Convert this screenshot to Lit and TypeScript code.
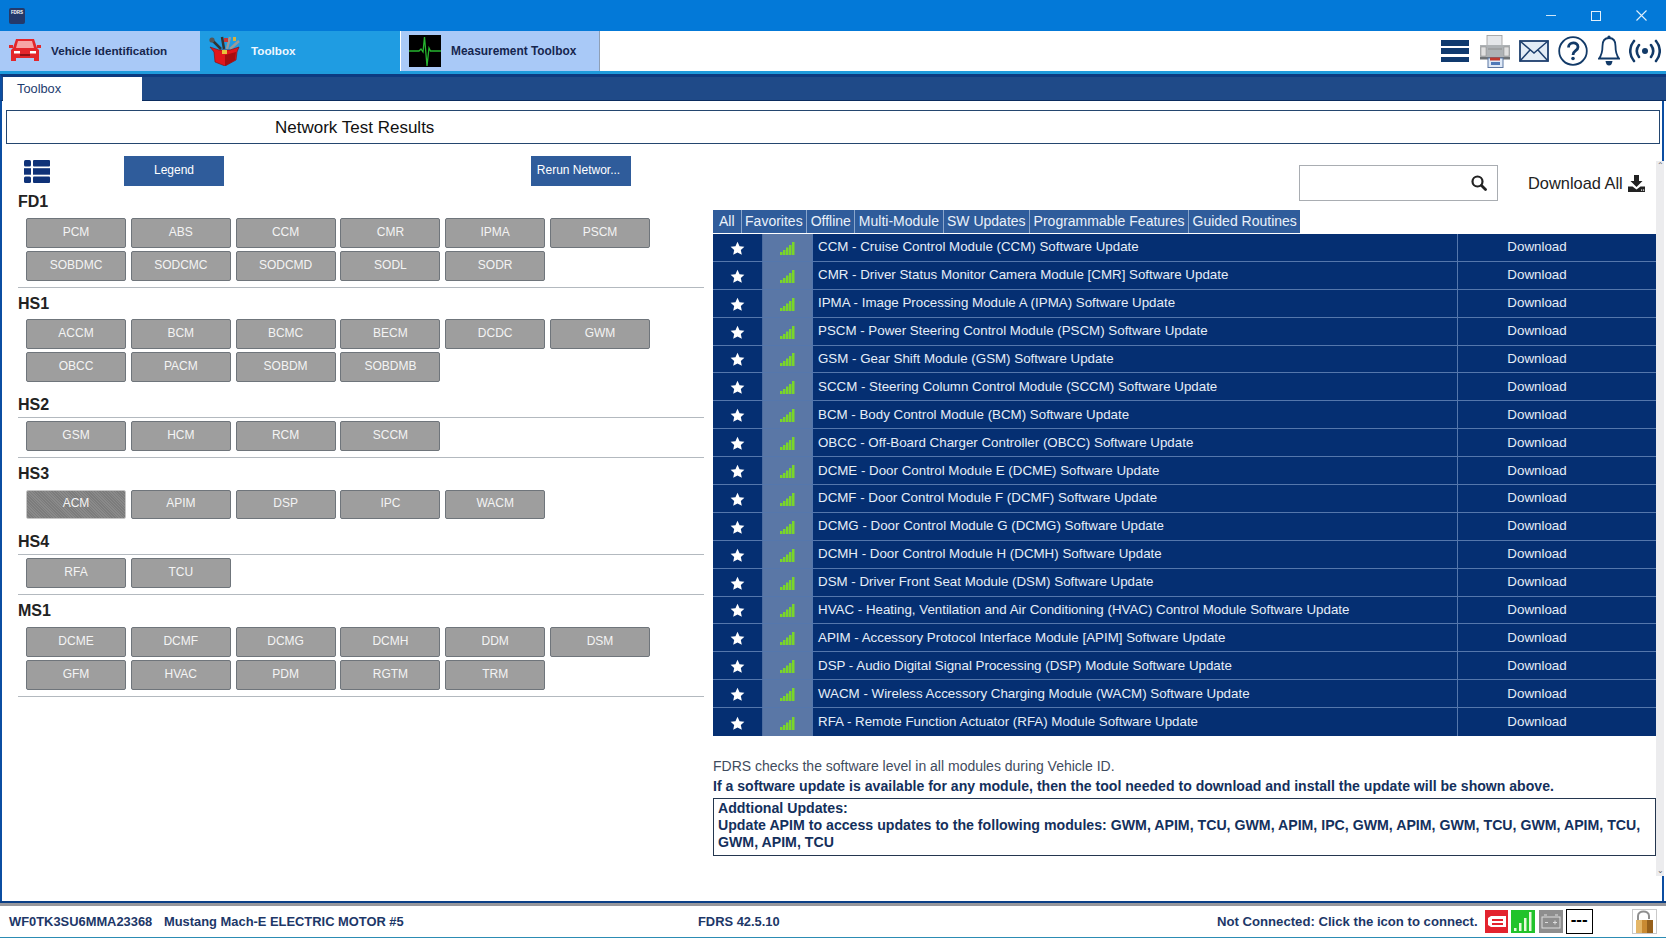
import { LitElement, html, css } from "lit";
import { customElement } from "lit/decorators.js";

const SECTIONS = [
  { name: "FD1", cls: "fd1", mods: ["PCM","ABS","CCM","CMR","IPMA","PSCM","SOBDMC","SODCMC","SODCMD","SODL","SODR"] },
  { name: "HS1", cls: "hs1", mods: ["ACCM","BCM","BCMC","BECM","DCDC","GWM","OBCC","PACM","SOBDM","SOBDMB"] },
  { name: "HS2", cls: "hs2", mods: ["GSM","HCM","RCM","SCCM"] },
  { name: "HS3", cls: "hs3", mods: ["ACM","APIM","DSP","IPC","WACM"] },
  { name: "HS4", cls: "hs4", mods: ["RFA","TCU"] },
  { name: "MS1", cls: "ms1", mods: ["DCME","DCMF","DCMG","DCMH","DDM","DSM","GFM","HVAC","PDM","RGTM","TRM"] },
];

const ROWS = [
  "CCM - Cruise Control Module (CCM) Software Update",
  "CMR - Driver Status Monitor Camera Module [CMR] Software Update",
  "IPMA - Image Processing Module A (IPMA) Software Update",
  "PSCM - Power Steering Control Module (PSCM) Software Update",
  "GSM - Gear Shift Module (GSM) Software Update",
  "SCCM - Steering Column Control Module (SCCM) Software Update",
  "BCM - Body Control Module (BCM) Software Update",
  "OBCC - Off-Board Charger Controller (OBCC) Software Update",
  "DCME - Door Control Module E (DCME) Software Update",
  "DCMF - Door Control Module F (DCMF) Software Update",
  "DCMG - Door Control Module G (DCMG) Software Update",
  "DCMH - Door Control Module H (DCMH) Software Update",
  "DSM - Driver Front Seat Module (DSM) Software Update",
  "HVAC - Heating, Ventilation and Air Conditioning (HVAC) Control Module Software Update",
  "APIM - Accessory Protocol Interface Module [APIM] Software Update",
  "DSP - Audio Digital Signal Processing (DSP) Module Software Update",
  "WACM - Wireless Accessory Charging Module (WACM) Software Update",
  "RFA - Remote Function Actuator (RFA) Module Software Update",
];

const FILTERS = ["All","Favorites","Offline","Multi-Module","SW Updates","Programmable Features","Guided Routines"];

const star = html`<svg class="star" viewBox="0 0 24 24" width="15" height="15"><path fill="#fff" d="M12 1l3.300 7.200 7.700.9-5.700 5.200 1.600 7.700L12 18.300 5.100 22l1.600-7.700L1 9.100l7.700-.9z"/></svg>`;
const bars = html`<svg viewBox="0 0 15 13" width="15" height="13"><g fill="#7ad629">
  <rect x="0" y="10" width="2.500" height="3"/><rect x="3" y="8" width="2.500" height="5"/><rect x="6" y="5.500" width="2.500" height="7.500"/><rect x="9" y="3" width="2.500" height="10"/><rect x="12" y="0" width="2.500" height="13"/></g></svg>`;

const carIcon = html`<svg viewBox="0 0 32 30" width="32" height="30"><g fill="#e3262b">
  <path d="M7 3h18l3 9 2 2v11h-5v-3H7v3H2V14l2-2z"/><path d="M0 9h4v3H0zM28 9h4v3h-4z"/></g>
  <path fill="#f7a5a5" d="M9 5h14l2 7H7z"/><g fill="#fff"><rect x="5" y="15" width="6" height="2.500"/><rect x="21" y="15" width="6" height="2.500"/></g><rect x="11" y="18" width="10" height="2" fill="#8c1115"/></svg>`;
const toolboxIcon = html`<svg viewBox="0 0 32 30" width="32" height="30">
  <path fill="none" stroke="#333" stroke-width="2.500" d="M3 4l9 9M13 1l2 12"/><path fill="none" stroke="#9a9a9a" stroke-width="2.500" d="M21 1l-3 12M30 5l-9 8"/><circle cx="3" cy="4" r="2.600" fill="#555"/><rect x="15" y="2" width="4" height="4" fill="#c33"/><rect x="24" y="1" width="3" height="4" fill="#d9b23c"/>
  <path fill="#e0161c" stroke="#7d0b0e" stroke-width=".6" d="M1 11l9 3h11l9-3-2 5-1 8-11 6-10-4-1-10z"/><path fill="#a50d11" d="M16 19l11-3-1 8-10 6z"/><rect x="13" y="14" width="5" height="4" fill="#e8c23c"/></svg>`;
const ecgIcon = html`<svg viewBox="0 0 32 32" width="32" height="32"><rect width="32" height="32" fill="#000"/><path fill="none" stroke="#26b52f" stroke-width="1.300" d="M0 16h10l2-2 2 3 1.500-15 2.500 29 2-18 1.500 3h11"/></svg>`;
const printerIcon = html`<svg viewBox="0 0 32 33" width="32" height="33">
  <rect x="8" y="0.500" width="15" height="12" fill="#e4e6e9" stroke="#999" stroke-width=".8"/><path fill="#aeb2b5" d="M1 10h30v13H1z"/><path fill="#6f7376" d="M1 22h30v2.500H1z"/><rect x="2" y="12" width="5" height="9" fill="#e0e0e0" stroke="#888" stroke-width=".5"/><rect x="25" y="12" width="5" height="9" fill="#e0e0e0" stroke="#888" stroke-width=".5"/><path stroke="#888" stroke-width=".8" d="M9 14h14"/>
  <rect x="9" y="23" width="15" height="9.500" fill="#dfe9f7" stroke="#5d78a3" stroke-width="1"/><path fill="#c03a2f" d="M11 22.500h10v3H11z"/><path fill="#4f79b8" d="M12 27h9v3h-9z"/></svg>`;
const mailIcon = html`<svg viewBox="0 0 30 22" width="30" height="22"><rect x="1" y="1" width="28" height="20" fill="#e3ecf6" stroke="#1d3f6e" stroke-width="1.800"/><path fill="none" stroke="#1d3f6e" stroke-width="1.500" d="M1 1l14 12L29 1M1 21l10-11M29 21L19 10"/></svg>`;
const helpIcon = html`<svg viewBox="0 0 30 30" width="30" height="30"><circle cx="15" cy="15" r="13.800" fill="#fff" stroke="#123a68" stroke-width="1.800"/><path fill="none" stroke="#123a68" stroke-width="2.800" d="M10.500 11.500c0-6 9.500-6 9.500-.5 0 4-5 3.500-5 8"/><circle cx="15" cy="22.500" r="1.800" fill="#123a68"/></svg>`;
const bellIcon = html`<svg viewBox="0 0 22 32" width="22" height="32"><path fill="#fff" stroke="#123a68" stroke-width="1.800" d="M11 3c-5 0-6.500 4-6.500 8 0 6-1.500 10-3.500 12.500h20C19 21 17.500 17 17.500 11c0-4-1.500-8-6.500-8z"/><circle cx="11" cy="2" r="1.600" fill="#123a68"/><path fill="#123a68" d="M7.500 26h7c-.5 3-1.500 4.500-3.500 4.500S8 29 7.500 26z"/></svg>`;
const signalIcon = html`<svg viewBox="0 0 32 24" width="32" height="24"><g fill="none" stroke="#123a68" stroke-width="2.600" stroke-linecap="round"><path d="M5 2C0 8 0 16 5 22M10 6c-3 4-3 8 0 12M27 2c5 6 5 14 0 20M22 6c3 4 3 8 0 12"/></g><circle cx="16" cy="12" r="3" fill="#123a68"/></svg>`;
const gridIcon = html`<svg viewBox="0 0 26 23" width="26" height="23"><g fill="#0f3278"><rect x="0" y="0" width="7" height="6.500" rx="1.500"/><rect x="9" y="0" width="17" height="6.500" rx="1"/><rect x="0" y="8.200" width="7" height="6.500"/><rect x="9" y="8.200" width="17" height="6.500"/><rect x="0" y="16.500" width="7" height="6.500" rx="1.500"/><rect x="9" y="16.500" width="17" height="6.500" rx="1"/></g></svg>`;
const searchIcon = html`<svg viewBox="0 0 16 16" width="16" height="16"><circle cx="6.500" cy="6.500" r="5" fill="none" stroke="#222" stroke-width="2.200"/><path stroke="#222" stroke-width="2.800" stroke-linecap="round" d="M10.500 10.500l4 4"/></svg>`;
const downloadIcon = html`<svg viewBox="0 0 17 17" width="17" height="17"><path fill="#222" d="M6 0h5v6h3.500L8.500 12 2.500 6H6z"/><path fill="#222" d="M0 11.500h4.500L8.500 14.500l4-3H17V17H0z"/><rect x="13" y="14.500" width="1.200" height="1.200" fill="#fff"/><rect x="15" y="14.500" width="1.200" height="1.200" fill="#fff"/></svg>`;
const redIcon = html`<svg viewBox="0 0 23 23" width="23" height="23"><rect width="23" height="23" fill="#e3232e"/><path fill="#fff" d="M3 8l3-2h15v11H6l-3-2z"/><path fill="#e3232e" d="M7 9h11v2H7zM7 13h11v2H7z"/></svg>`;
const greenIcon = html`<svg viewBox="0 0 24 23" width="24" height="23"><rect width="24" height="23" fill="#21c32b"/><g fill="#e9f9dc"><rect x="3" y="18" width="2.500" height="3"/><rect x="8" y="13" width="2.500" height="8"/><rect x="13" y="8" width="2.500" height="13"/><rect x="18" y="2" width="2.500" height="19"/></g></svg>`;
const battIcon = html`<svg viewBox="0 0 24 23" width="24" height="23"><rect width="24" height="23" fill="#8e8e8e"/><rect x="3" y="7" width="18" height="11" fill="none" stroke="#dcdcdc"/><path stroke="#dcdcdc" d="M5 5h3M16 5h3M6 12.500h3M14 12.500h4M16 10.500v4"/></svg>`;
const lockIcon = html`<svg viewBox="0 0 25 25" width="25" height="25"><rect x=".5" y=".5" width="24" height="24" fill="#fff" stroke="#c9c9c9"/><path fill="none" stroke="#8f8f8f" stroke-width="2" d="M6 11V7c0-6 11-6 11 0v3"/><rect x="4" y="11" width="17" height="13" fill="#c98a32"/><rect x="4" y="11" width="6" height="13" fill="#e4b667"/><rect x="15" y="11" width="6" height="13" fill="#96601b"/></svg>`;

@customElement("app-root")
export class AppRoot extends LitElement {
  static styles = css`
    :host { display: flex; flex-direction: column; width: 1666px; height: 938px; overflow: hidden; background: #fff; font-family: "Liberation Sans", Arial, sans-serif; color: #1a2f55; }
    svg { display: block; flex: none; }

    .title { height: 31px; flex: none; background: #0379d8; display: flex; align-items: center; padding-left: 9px; }
    .logo { width: 16px; height: 16px; background: #24396a; border-radius: 2px; color: #fff; font-size: 4.500px; font-weight: 700; text-align: center; line-height: 9px; overflow: hidden; }
    .winbtns { margin-left: auto; display: flex; align-items: center; padding-right: 19px; gap: 35px; }
    .min { width: 10px; height: 1px; background: #cfe6f8; }
    .max { width: 10px; height: 10px; border: 1px solid #e2f0fb; box-sizing: border-box; }

    .nav { height: 40px; flex: none; display: flex; background: #fff; border-bottom: 3px solid #1f9bdc; box-sizing: content-box; }
    .nt { width: 200px; display: flex; align-items: center; background: #a9c9f7; font-size: 11.700px; font-weight: 700; color: #16264f; padding-bottom: 1px; box-sizing: border-box; }
    .nt .ic { width: 51px; display: flex; justify-content: center; padding-right: 2px; box-sizing: border-box; }
    .nt.on { background: #1f9ce2; color: #eef7ff; }
    .nt.m { margin-left: 1px; width: 199px; border-right: 1px solid #8f9fb5; font-size: 11.900px; padding-bottom: 0; }
    .nt.m .ic { justify-content: flex-end; padding-right: 10px; width: 50px; }
    .tools { margin-left: auto; display: flex; align-items: center; padding-right: 5px; }
    .burger { width: 28px; height: 22px; margin-right: 10px; display: flex; flex-direction: column; justify-content: space-between; }
    .burger i { display: block; height: 5.500px; background: #103a6e; }
    .tools .p { margin-right: 8px; }
    .tools .e { margin-right: 9px; }
    .tools .h { margin-right: 10px; }
    .tools .b { margin-right: 9px; }

    .sub { height: 27px; flex: none; background: #1f4a88; border-top: 3px solid #0d3a80; border-bottom: 1px solid #0b2c5e; box-sizing: border-box; padding-left: 1px; border-left: 2px solid #0b4ea2; display: flex; align-items: flex-end; }
    .subtab { width: 139px; height: 24px; margin-bottom: -1px; background: #fff; font-size: 12.800px; line-height: 24px; padding-left: 14px; box-sizing: border-box; color: #1d3c6e; }

    .frame { flex: 1; min-height: 0; margin-right: 2px; border-left: 2px solid #0b4ea2; border-right: 2px solid #0b4ea2; display: flex; flex-direction: column; }
    .head { flex: none; height: 34px; margin: 9px 2px 0 4px; border: 1px solid #24466f; box-sizing: border-box; font-size: 17px; line-height: 33px; padding-left: 268px; color: #111; }
    .body { flex: 1; display: flex; min-height: 0; }

    .left { width: 711px; flex: none; box-sizing: border-box; padding: 12px 9px 0 16px; }
    .lt { height: 30px; display: flex; align-items: center; margin-bottom: 9px; }
    .lt .g { margin-left: 6px; }
    .pri { height: 30px; width: 100px; background: #2f5c9b; color: #fff; font-size: 12px; display: flex; align-items: center; justify-content: center; box-sizing: border-box; padding-bottom: 2px; }
    .pri.leg { margin-left: 74px; }
    .pri.rer { margin-left: 307px; padding-right: 5px; }

    .lbl { font-size: 16px; font-weight: 700; height: 14px; line-height: 14px; color: #222; }
    .sec + .sec .lbl { line-height: 16px; }
    .rule { height: 1px; background: #b3b9bf; }
    .mods { display: grid; grid-template-columns: repeat(6, 100px); column-gap: 4.800px; row-gap: 3px; grid-auto-rows: 30px; margin: 9px 0 0 8px; }
    .mod { background: #9e9e9e; border: 1px solid #6f757b; border-radius: 2px; box-sizing: border-box; color: #f4f4f4; font-size: 12px; display: flex; align-items: center; justify-content: center; padding-bottom: 3px; }
    .mod.sel { border-color: #c5c5c5; background: repeating-linear-gradient(45deg, #7c7c7c 0 1px, #8a8a8a 1px 2px); }
    .sec { margin-bottom: 8px; }
    .sec .rule { margin-top: 6px; }
    .sec.hs1 { margin-bottom: 15px; }
    .sec.hs2 .rule.top, .sec.hs4 .rule.top { margin-bottom: -6px; }
    .sec.hs3 { margin-bottom: 15px; }
    .sec.hs3 .mods { margin-top: 10px; grid-auto-rows: 29px; }
    .sec.ms1 .mods { margin-top: 10px; }

    .right { width: 943px; flex: none; display: flex; flex-direction: column; }
    .rt { margin-top: 21px; height: 36px; flex: none; display: flex; align-items: center; }
    .search { margin-left: 586px; width: 199px; height: 36px; box-sizing: border-box; border: 1px solid #a9adb2; display: flex; align-items: center; justify-content: flex-end; padding-right: 10px; }
    .dlall { margin-left: 30px; display: flex; align-items: center; gap: 5px; font-size: 16.400px; color: #222; }
    .filters { margin-top: 9px; height: 23px; flex: none; display: flex; align-self: flex-start; background: #2f5c9b; }
    .f { color: #eaf1fa; font-size: 14px; line-height: 22px; padding: 0 3.500px; border-right: 1px solid #89a5cb; white-space: nowrap; }
    .f:first-child { padding: 0 6px; }
    .f:last-child { border-right: none; }
    .tbl { margin-top: 1px; height: 502px; flex: none; display: grid; grid-template-rows: repeat(18, 1fr); background: #052f72; }
    .r { display: grid; grid-template-columns: 49px 50px 645px 199px; border-bottom: 1px solid #5577ac; color: #e6eef8; font-size: 13.330px; min-height: 0; }
    .r:last-child { border-bottom: none; }
    .c { display: flex; align-items: center; justify-content: center; min-height: 0; }
    .c.st { padding-top: 2px; }
    .c.sg { background: #5a77a6; border-left: 1px solid #4c6c9f; padding-top: 2px; }
    .c.nm { justify-content: flex-start; padding: 0 0 1px 5px; border-left: 1px solid #5577ac; }
    .c.dl { padding: 0 40px 1px 0; border-left: 1px solid #5577ac; }
    .n1 { margin-top: 20px; font-size: 14px; line-height: 20px; color: #3f4c5e; }
    .n2 { font-size: 14.090px; font-weight: 700; line-height: 20px; color: #14305c; }
    .box { margin-top: 2px; height: 58px; box-sizing: border-box; border: 1px solid #24364f; padding: 1px 4px; font-size: 14.160px; font-weight: 700; line-height: 17px; color: #14305c; }

    .sb { width: 8px; flex: none; margin-top: 17px; height: 715px; background: #ececee; display: flex; flex-direction: column; justify-content: space-between; align-items: center; color: #666; font-size: 8px; line-height: 10px; }

    .grey { flex: none; height: 5px; background: linear-gradient(#0b3f86 0 2px, #97979c 2px); }
    .status { flex: none; height: 32px; box-sizing: border-box; border-bottom: 1px solid #2c8cb4; display: flex; align-items: center; padding-left: 9px; font-size: 12.900px; font-weight: 700; color: #1d3768; }
    .vin { width: 155px; }
    .veh { width: 534px; }
    .ver { width: 519px; }
    .nc { font-size: 13.150px; }
    .status .ic { margin-left: 3.500px; }
    .status .first { margin-left: 7px; }
    .dash { width: 27px; height: 25px; box-sizing: border-box; border: 1px solid #000; margin-left: 3px; color: #000; font-size: 17px; text-align: center; line-height: 20px; font-weight: 700; }
    .lock { margin-left: 39px; }
  `;

  render() {
    return html`
      <div class="title">
        <div class="logo">FDRS</div>
        <div class="winbtns">
          <div class="min"></div><div class="max"></div>
          <svg viewBox="0 0 11 11" width="11" height="11"><path stroke="#e2f0fb" stroke-width="1.100" d="M.5.5l10 10M10.500.5l-10 10"/></svg>
        </div>
      </div>
      <div class="nav">
        <div class="nt"><div class="ic">${carIcon}</div>Vehicle Identification</div>
        <div class="nt on"><div class="ic">${toolboxIcon}</div>Toolbox</div>
        <div class="nt m"><div class="ic">${ecgIcon}</div>Measurement Toolbox</div>
        <div class="tools">
          <div class="burger"><i></i><i></i><i></i></div>
          <div class="p">${printerIcon}</div><div class="e">${mailIcon}</div><div class="h">${helpIcon}</div><div class="b">${bellIcon}</div>${signalIcon}
        </div>
      </div>
      <div class="sub"><div class="subtab">Toolbox</div></div>
      <div class="frame">
        <div class="head">Network Test Results</div>
        <div class="body">
          <div class="left">
            <div class="lt">
              <div class="g">${gridIcon}</div>
              <div class="pri leg">Legend</div>
              <div class="pri rer">Rerun Networ...</div>
            </div>
            ${SECTIONS.map(s => html`
              <div class="sec ${s.cls}">
                <div class="lbl">${s.name}</div>
                ${s.cls === "hs2" || s.cls === "hs4" ? html`<div class="rule top"></div>` : ""}
                <div class="mods">${s.mods.map(m => html`<div class="mod ${m === "ACM" ? "sel" : ""}">${m}</div>`)}</div>
                ${s.cls === "hs1" || s.cls === "hs3" ? "" : html`<div class="rule"></div>`}
              </div>`)}
          </div>
          <div class="right">
            <div class="rt">
              <div class="search">${searchIcon}</div>
              <div class="dlall">Download All ${downloadIcon}</div>
            </div>
            <div class="filters">${FILTERS.map(f => html`<div class="f">${f}</div>`)}</div>
            <div class="tbl">
              ${ROWS.map(r => html`<div class="r">
                <div class="c st">${star}</div>
                <div class="c sg">${bars}</div>
                <div class="c nm">${r}</div>
                <div class="c dl">Download</div>
              </div>`)}
            </div>
            <div class="n1">FDRS checks the software level in all modules during Vehicle ID.</div>
            <div class="n2">If a software update is available for any module, then the tool needed to download and install the update will be shown above.</div>
            <div class="box">Addtional Updates:<br>Update APIM to access updates to the following modules: GWM, APIM, TCU, GWM, APIM, IPC, GWM, APIM, GWM, TCU, GWM, APIM, TCU, GWM, APIM, TCU</div>
          </div>
          <div class="sb"><span>⌃</span><span>⌄</span></div>
        </div>
      </div>
      <div class="grey"></div>
      <div class="status">
        <div class="vin">WF0TK3SU6MMA23368</div>
        <div class="veh">Mustang Mach-E ELECTRIC MOTOR #5</div>
        <div class="ver">FDRS 42.5.10</div>
        <div class="nc">Not Connected: Click the icon to connect.</div>
        <div class="ic first">${redIcon}</div><div class="ic">${greenIcon}</div><div class="ic">${battIcon}</div>
        <div class="dash">---</div>
        <div class="lock">${lockIcon}</div>
      </div>
    `;
  }
}
